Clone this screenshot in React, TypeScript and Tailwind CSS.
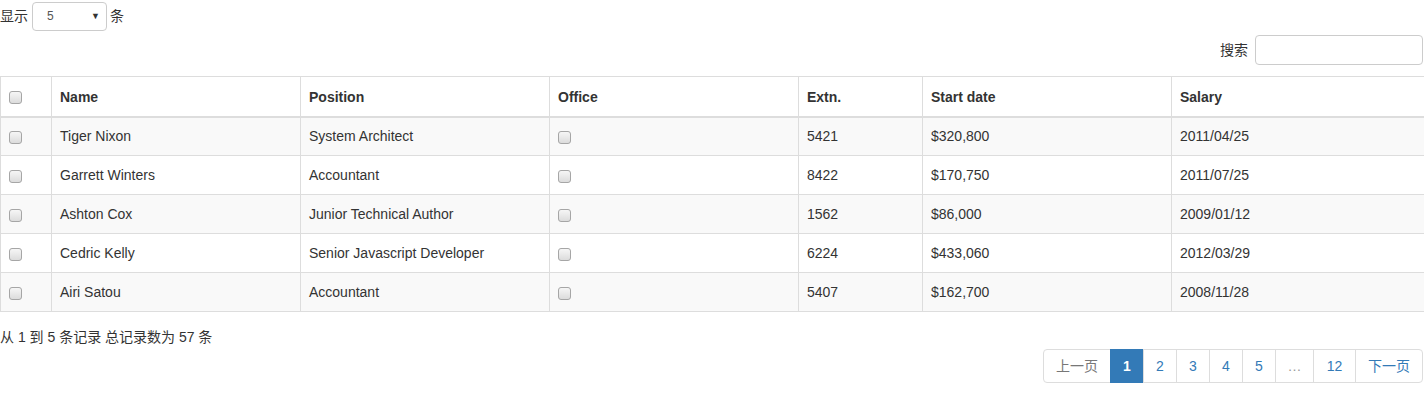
const rows = [
  { name: 'Tiger Nixon', position: 'System Architect', extn: '5421', start: '$320,800', salary: '2011/04/25' },
  { name: 'Garrett Winters', position: 'Accountant', extn: '8422', start: '$170,750', salary: '2011/07/25' },
  { name: 'Ashton Cox', position: 'Junior Technical Author', extn: '1562', start: '$86,000', salary: '2009/01/12' },
  { name: 'Cedric Kelly', position: 'Senior Javascript Developer', extn: '6224', start: '$433,060', salary: '2012/03/29' },
  { name: 'Airi Satou', position: 'Accountant', extn: '5407', start: '$162,700', salary: '2008/11/28' },
];

function Check() {
  return <span className="inline-block w-[13px] h-[13px] rounded-[3px] border border-[#a6a6a6] bg-gradient-to-b from-[#f6f6f6] to-[#dcdcdc] align-middle" />;
}

const pages = ['1', '2', '3', '4', '5', '…', '12'];

export default function App() {
  return (
    <div className="font-['Liberation_Sans','Noto_Sans_CJK_SC',sans-serif] text-[14px] leading-[20px] text-[#333] bg-white w-[1424px] h-[400px]">
      <div className="flex items-center h-[31px]">
        <span>显示</span>
        <div className="ml-[4px] mt-[1px] w-[75px] h-[29px] border border-[#ccc] rounded-[4px] flex items-center justify-between pl-[14px] pr-[6px] text-[12px] text-[#555]">
          <span>5</span>
          <span className="text-[9px] text-[#333]">▼</span>
        </div>
        <span className="ml-[3px]">条</span>
      </div>
      <div className="flex justify-end items-center mt-[4px] pr-[1px]">
        <span>搜索</span>
        <div className="ml-[7px] w-[168px] h-[30px] border border-[#ccc] rounded-[4px]" />
      </div>
      <table className="mt-[11px] w-[1424px] table-fixed border-collapse">
        <colgroup>
          <col className="w-[51px]" />
          <col className="w-[249px]" />
          <col className="w-[249px]" />
          <col className="w-[249px]" />
          <col className="w-[124px]" />
          <col className="w-[249px]" />
          <col className="w-[253px]" />
        </colgroup>
        <thead>
          <tr className="h-[40px]">
            <th className="border border-[#ddd] border-b-2 pl-[8px] text-left"><Check /></th>
            {['Name', 'Position', 'Office', 'Extn.', 'Start date', 'Salary'].map(h => (
              <th key={h} className="border border-[#ddd] border-b-2 px-[8px] pt-[2px] text-left font-bold">{h}</th>
            ))}
          </tr>
        </thead>
        <tbody>
          {rows.map((r, i) => (
            <tr key={r.name} className={i % 2 === 0 ? 'h-[39px] bg-[#f9f9f9]' : 'h-[39px] bg-white'}>
              <td className="border border-[#ddd] pl-[8px]"><Check /></td>
              <td className="border border-[#ddd] px-[8px]">{r.name}</td>
              <td className="border border-[#ddd] px-[8px]">{r.position}</td>
              <td className="border border-[#ddd] px-[8px]"><Check /></td>
              <td className="border border-[#ddd] px-[8px]">{r.extn}</td>
              <td className="border border-[#ddd] px-[8px]">{r.start}</td>
              <td className="border border-[#ddd] px-[8px]">{r.salary}</td>
            </tr>
          ))}
        </tbody>
      </table>
      <div className="mt-[15px]">从 1 到 5 条记录 总记录数为 57 条</div>
      <div className="flex justify-end mt-[2px] pr-[1px]">
        <div className="flex h-[34px]">
          <span className="flex items-center px-[12px] border border-[#ddd] rounded-l-[4px] text-[#777]">上一页</span>
          {pages.map(p => (
            <span
              key={p}
              className={
                p === '1'
                  ? 'flex items-center justify-center w-[34px] bg-[#337ab7] border border-[#337ab7] text-white font-bold -ml-px'
                  : p === '…'
                  ? 'flex items-center justify-center w-[39px] border border-[#ddd] text-[#999] -ml-px'
                  : p === '12'
                  ? 'flex items-center justify-center w-[43px] border border-[#ddd] text-[#337ab7] -ml-px'
                  : 'flex items-center justify-center w-[34px] border border-[#ddd] text-[#337ab7] -ml-px'
              }
            >
              {p}
            </span>
          ))}
          <span className="flex items-center px-[12px] border border-[#ddd] rounded-r-[4px] text-[#337ab7] -ml-px">下一页</span>
        </div>
      </div>
    </div>
  );
}
